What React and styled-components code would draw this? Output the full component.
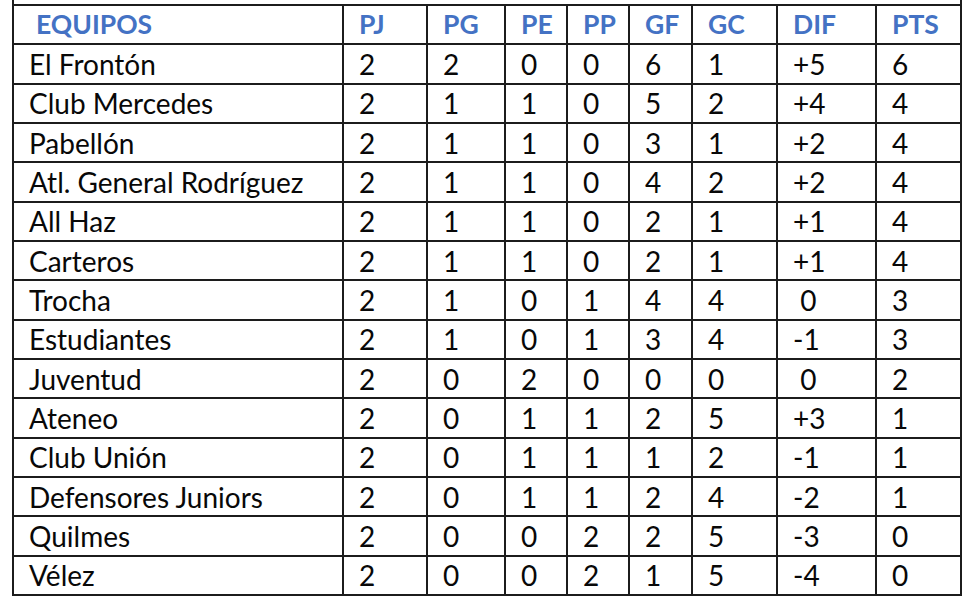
import styled, { createGlobalStyle } from "styled-components";

const GlobalStyle = createGlobalStyle`
    html, body {
        margin: 0;
        padding: 0;
        background: #ffffff;
    }
`;

const Page = styled.div`
    padding-left: 12px;
    width: 977px;
    height: 604px;
    box-sizing: border-box;
    overflow: hidden;
`;

const Sheet = styled.div`
    display: grid;
    grid-template-columns: 328px 82px 76px 60px 60px 61px 83px 97px 83px;
    grid-template-rows: 4px repeat(15, 37.33px);
    gap: 2px;
    padding: 0 2px 2px 2px;
    width: max-content;
    background: #1c1c1c;
    font-family: Lato, "Liberation Sans", sans-serif;
`;

const TitleRow = styled.div`
    grid-column: 1 / -1;
    background: #ffffff;
`;

const Cell = styled.div`
    display: flex;
    align-items: center;
    background: #ffffff;
    padding-left: ${(p) => (p.$indent ? "22px" : "15px")};
    white-space: pre;
    color: ${(p) => (p.$head ? "#4472c4" : "#080808")};
    font-weight: ${(p) => (p.$head ? 700 : 400)};
    font-size: ${(p) => (p.$head ? "26.5px" : "28px")};
    line-height: 1;
`;

const headers = ["EQUIPOS", "PJ", "PG", "PE", "PP", "GF", "GC", "DIF", "PTS"];

const rows = [
    ["El Frontón", "2", "2", "0", "0", "6", "1", "+5", "6"],
    ["Club Mercedes", "2", "1", "1", "0", "5", "2", "+4", "4"],
    ["Pabellón", "2", "1", "1", "0", "3", "1", "+2", "4"],
    ["Atl. General Rodríguez", "2", "1", "1", "0", "4", "2", "+2", "4"],
    ["All Haz", "2", "1", "1", "0", "2", "1", "+1", "4"],
    ["Carteros", "2", "1", "1", "0", "2", "1", "+1", "4"],
    ["Trocha", "2", "1", "0", "1", "4", "4", " 0", "3"],
    ["Estudiantes", "2", "1", "0", "1", "3", "4", "-1", "3"],
    ["Juventud", "2", "0", "2", "0", "0", "0", " 0", "2"],
    ["Ateneo", "2", "0", "1", "1", "2", "5", "+3", "1"],
    ["Club Unión", "2", "0", "1", "1", "1", "2", "-1", "1"],
    ["Defensores Juniors", "2", "0", "1", "1", "2", "4", "-2", "1"],
    ["Quilmes", "2", "0", "0", "2", "2", "5", "-3", "0"],
    ["Vélez", "2", "0", "0", "2", "1", "5", "-4", "0"],
];

export default function App() {
    return (
        <Page>
            <GlobalStyle />
            <Sheet>
                <TitleRow />
                {headers.map((h, i) => (
                    <Cell key={h} $head $indent={i === 0}>{h}</Cell>
                ))}
                {rows.map((row) =>
                    row.map((v, i) => <Cell key={row[0] + i}>{v}</Cell>)
                )}
            </Sheet>
        </Page>
    );
}
